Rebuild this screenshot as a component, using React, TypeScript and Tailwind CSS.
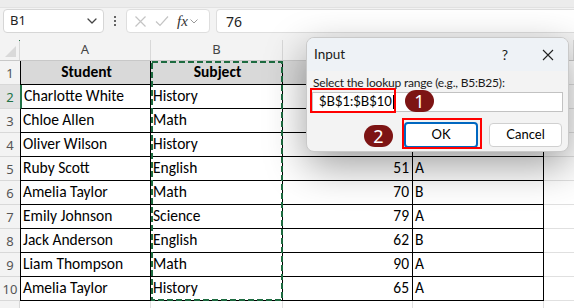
import React from "react";

const ROWS: string[][] = [
  ["Student", "Subject", "", ""],
  ["Charlotte White", "History", "", ""],
  ["Chloe Allen", "Math", "", ""],
  ["Oliver Wilson", "History", "", ""],
  ["Ruby Scott", "English", "51", "A"],
  ["Amelia Taylor", "Math", "70", "B"],
  ["Emily Johnson", "Science", "79", "A"],
  ["Jack Anderson", "English", "62", "B"],
  ["Liam Thompson", "Math", "90", "A"],
  ["Amelia Taylor", "History", "65", "A"],
];

const cellFont = { fontFamily: "Carlito, Lato, 'Liberation Sans', sans-serif" };
const uiFont = { fontFamily: "'Noto Sans', 'Open Sans', sans-serif" };
const dlgFont = { fontFamily: "Lato, 'Noto Sans', sans-serif" };

function Chevron({ className }: { className?: string }) {
  return (
    <svg className={className} width="10" height="6" viewBox="0 0 10 6" fill="none">
      <path d="M1 1l4 4 4-4" stroke="#444" strokeWidth="1.3" strokeLinecap="round" strokeLinejoin="round" />
    </svg>
  );
}

export default function App() {
  return (
    <div className="relative w-[574px] h-[308px] overflow-hidden bg-white" style={uiFont}>
      {/* Formula bar */}
      <div className="h-[40px] bg-[#f3f3f3] flex flex-col">
        <div className="h-[8px] bg-[#ececec] border-b border-[#e2e2e2]" />
        <div className="flex items-start pl-[3px] pt-[1px]">
          <div className="w-[101px] h-[24px] bg-white border border-[#d6d6d6] rounded-[4px] flex items-center justify-between pl-[6px] pr-[6px] text-[13px] text-[#222]">
            <span>B1</span>
            <Chevron />
          </div>
          <div className="w-[22px] h-[24px] flex flex-col items-center justify-center gap-[2px]">
            <span className="w-[2px] h-[2px] bg-[#333] rounded-full" />
            <span className="w-[2px] h-[2px] bg-[#333] rounded-full" />
            <span className="w-[2px] h-[2px] bg-[#333] rounded-full" />
          </div>
          <div className="w-[84px] h-[24px] bg-white border border-[#dedede] rounded-[4px] flex items-center pl-[7px] gap-[8px]">
            <svg width="13" height="13" viewBox="0 0 13 13">
              <path d="M1.5 1.5l10 10M11.5 1.5l-10 10" stroke="#c4c4c4" strokeWidth="1.2" />
            </svg>
            <svg width="14" height="12" viewBox="0 0 14 12">
              <path d="M1 6.5l4 4L13 1.5" stroke="#c4c4c4" strokeWidth="1.2" fill="none" />
            </svg>
            <span className="flex items-center gap-[2px]">
              <span className="italic text-[15px] leading-none text-[#333]" style={{ fontFamily: "'Liberation Serif', serif" }}>
                fx
              </span>
              <svg width="8" height="5" viewBox="0 0 8 5" fill="none">
                <path d="M0.5 0.5l3.5 3.5 3.5-3.5" stroke="#999" strokeWidth="1" />
              </svg>
            </span>
          </div>
          <div className="ml-[6px] flex-1 h-[24px] bg-white border-y border-l border-[#dedede] rounded-l-[4px] flex items-center pl-[9px] text-[14px] text-[#222]">
            76
          </div>
        </div>
      </div>

      {/* Column header row */}
      <div className="flex h-[21px] bg-[#f3f3f3] border-b border-[#c8c8c8] text-[13px] text-[#444]">
        <div className="w-[20px] relative border-r border-[#d8d8d8]">
          <svg className="absolute right-[3px] bottom-[3px]" width="11" height="11" viewBox="0 0 11 11">
            <path d="M11 0L11 11L0 11Z" fill="#d9d9d9" />
          </svg>
          <span className="absolute right-[-1px] top-0 w-[1px] h-[1px] bg-[#217346]" />
        </div>
        {[
          ["A", 131],
          ["B", 132],
          ["", 130],
          ["", 131],
          [" ", 30],
        ].map(([l, w], k) => (
          <div
            key={k}
            className="flex items-center justify-center border-r border-[#d8d8d8]"
            style={{ width: w as number }}
          >
            {l}
          </div>
        ))}
      </div>

      {/* Rows */}
      {ROWS.map((r, i) => {
        const header = i === 0;
        const active = i === 1;
        return (
          <div key={i} className="flex h-[24px]">
            <div
              className={
                "w-[20px] flex items-center justify-center pt-[2px] text-[13px] border-b border-[#d8d8d8] " +
                (active ? "bg-[#e2e2e2] text-[#217346]" : "bg-[#f3f3f3] text-[#555]")
              }
            >
              {i + 1}
            </div>
            <div
              className={
                "w-[131px] flex items-end pb-[1px] pl-[2px] text-[15.5px] text-black border-b border-r border-l border-black " +
                (header ? "bg-[#d9d9d9] font-bold justify-center" : "") +
                (active ? " border-l-2 border-l-[#217346]" : "")
              }
              style={cellFont}
            >
              {r[0]}
            </div>
            <div
              className={
                "w-[132px] flex items-end pb-[1px] pl-[2px] text-[15.5px] text-black border-b border-r border-black " +
                (header ? "bg-[#d9d9d9] font-bold justify-center" : "")
              }
              style={cellFont}
            >
              {r[1]}
            </div>
            <div
              className={
                "w-[130px] flex items-end pb-[1px] pr-[3px] text-[15.5px] text-black border-b border-r border-black " +
                (header ? "bg-[#d9d9d9] font-bold justify-center" : "justify-end")
              }
              style={cellFont}
            >
              {r[2]}
            </div>
            <div
              className={
                "w-[131px] flex items-end pb-[1px] pl-[2px] text-[15.5px] text-black border-b border-r border-black " +
                (header ? "bg-[#d9d9d9] font-bold justify-center" : "")
              }
              style={cellFont}
            >
              {r[3]}
            </div>
            <div className="w-[30px] border-b border-[#e0e0e0]" />
          </div>
        );
      })}
      <div className="flex h-[10px]">
        <div className="w-[20px] bg-[#f3f3f3] border-r border-[#d8d8d8]" />
        <div className="w-[131px] border-r border-[#e0e0e0]" />
        <div className="w-[132px] border-r border-[#e0e0e0]" />
        <div className="w-[130px] border-r border-[#e0e0e0]" />
        <div className="w-[131px] border-r border-[#e0e0e0]" />
      </div>

      {/* marching ants around B1:B10 */}
      <svg className="absolute left-[151px] top-[61px]" width="132" height="240" viewBox="0 0 132 240">
        <rect x="1" y="1" width="130" height="238" fill="none" stroke="#1d6b40" strokeWidth="2" strokeDasharray="6 3" />
      </svg>

      {/* Dialog */}
      <div
        className="absolute left-[306px] top-[37px] w-[263px] h-[115px] rounded-[8px] border border-[#c9c9c9] bg-[#f3f3f3] shadow-[0_14px_40px_rgba(0,0,0,0.38)] overflow-hidden flex flex-col"
        style={dlgFont}
      >
        <div className="h-[33px] bg-[#eef2f6] flex items-center pl-[7px] text-[13.5px] text-[#1a1a1a]">
          <span className="flex-1">Input</span>
          <span className="w-[20px] text-center mr-[27px] text-[14px]">?</span>
          <svg className="mr-[14px]" width="12" height="12" viewBox="0 0 12 12">
            <path d="M1 1l10 10M11 1L1 11" stroke="#222" strokeWidth="1.1" />
          </svg>
        </div>
        <div className="flex-1 px-[5px] pt-[4px] flex flex-col">
          <div className="text-[12px] leading-[16px] tracking-[-0.2px] text-[#1a1a1a] pl-[1px]">
            Select the lookup range (e.g., B5:B25):
          </div>
          <div className="mt-[1px] h-[20px] bg-white border border-[#c2c2c2] flex items-center pl-[6px] text-[13px] text-black">
            <span>$B$1:$B$10</span>
            <span className="w-[1px] h-[14px] bg-black ml-[1px]" />
          </div>
          <div className="mt-[11px] flex justify-end gap-[11px] pr-[1px]">
            <div className="w-[74px] h-[26px] -mt-[1px] bg-white border-2 border-[#0067c0] rounded-[4px] flex items-center justify-center text-[13px] text-black">
              OK
            </div>
            <div className="w-[73px] h-[24px] bg-white border border-[#d0d0d0] rounded-[4px] flex items-center justify-center text-[13px] text-black">
              Cancel
            </div>
          </div>
        </div>
      </div>

      {/* Red highlight boxes */}
      <div className="absolute left-[310px] top-[88px] w-[86px] h-[25px] border-2 border-[#ff0000]" />
      <div className="absolute left-[402px] top-[118px] w-[80px] h-[31px] border-2 border-[#ff0000]" />

      {/* Number badges */}
      <div className="absolute left-[405px] top-[90px] w-[29px] h-[22px] rounded-full bg-[#7d1414] flex items-center justify-center text-white text-[18px] leading-none">
        1
      </div>
      <div className="absolute left-[364px] top-[125px] w-[29px] h-[22px] rounded-full bg-[#7d1414] flex items-center justify-center text-white text-[18px] leading-none">
        2
      </div>
    </div>
  );
}
